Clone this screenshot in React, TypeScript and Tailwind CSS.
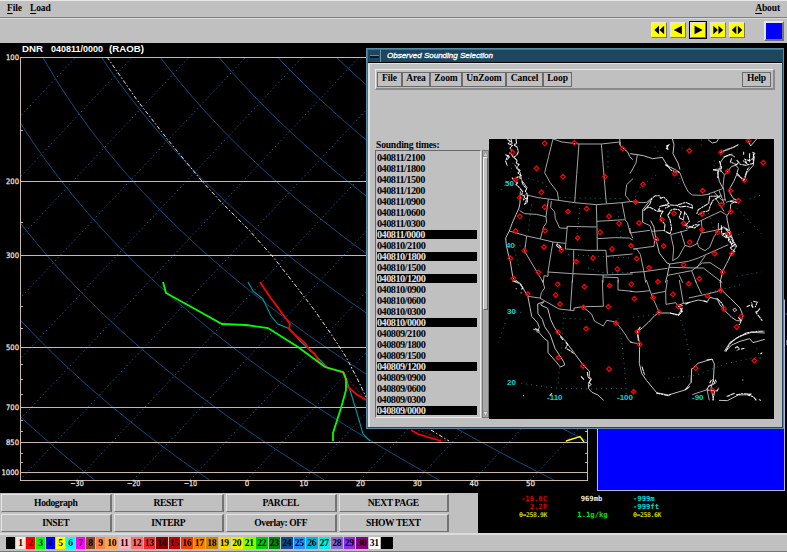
import React from "react";

const SERIF = "font-['Liberation_Serif','Times_New_Roman',serif] font-bold";
const RAISED =
  "border border-t-[#e6e6e6] border-l-[#e6e6e6] border-b-[#737373] border-r-[#737373]";

/* ---------- Skew-T geometry ---------- */
const yOf = (p: number) => 472 + 415 * Math.log10(p / 1000);
const xOf = (t: number, y: number) => 77 + (t + 30) * 5.67 + 0.936 * (480 - y);

const isotherms = Array.from({ length: 18 }, (_, i) => 20 + 56.7 * (i - 7));
const adiabats = Array.from({ length: 19 }, (_, i) => {
  const theta = 183.15 + 20 * i;
  const pts: string[] = [];
  for (let y = 57; y <= 480; y += 9) {
    const p = Math.pow(10, (y - 472) / 415);
    pts.push(`${xOf(theta * Math.pow(p, 0.286) - 273.15, y).toFixed(1)},${y}`);
  }
  return pts.join(" ");
});
const levels = [100, 200, 300, 500, 700, 850, 1000];
const minor = [150, 250, 400, 450, 550, 600, 650, 750, 800, 900, 950];
const temps = [-30, -20, -10, 0, 10, 20, 30, 40, 50];

function SkewT() {
  return (
    <svg width="787" height="450" viewBox="0 43 787 450" className="block">
      <rect x="0" y="43" width="787" height="450" fill="#000" />
      <defs>
        <clipPath id="plot">
          <rect x="20" y="57" width="568" height="423" />
        </clipPath>
      </defs>
      <g className="font-['Liberation_Sans',Arial,sans-serif] text-[9px] font-bold" fill="#fff">
        <text x="22" y="52" textLength="21" lengthAdjust="spacingAndGlyphs">DNR</text>
        <text x="51" y="52" textLength="52" lengthAdjust="spacingAndGlyphs">040811/0000</text>
        <text x="109" y="52" textLength="35" lengthAdjust="spacingAndGlyphs">(RAOB)</text>
      </g>
      <g clipPath="url(#plot)" fill="none">
        {isotherms.map((x) => (
          <line key={x} x1={x} y1="480" x2={x + 396} y2="57" stroke="#12568f" strokeWidth="1" strokeDasharray="1.5 2.5" />
        ))}
        {adiabats.map((pts) => (
          <polyline key={pts} points={pts} stroke="#0f4c84" strokeWidth="1" />
        ))}
      </g>
      <g stroke="#c9b8b0" strokeWidth="1" shapeRendering="crispEdges">
        {levels.map((p) => (
          <line key={p} x1="20" x2="588" y1={Math.floor(yOf(p)) + 0.5} y2={Math.floor(yOf(p)) + 0.5} />
        ))}
        <line x1="20" x2="588" y1="480.5" y2="480.5" />
        <line x1="20.5" x2="20.5" y1="57" y2="481" />
        <line x1="587.5" x2="587.5" y1="57" y2="481" />
        {minor.map((p) => (
          <path key={p} d={`M20 ${Math.floor(yOf(p))}.5h3M585 ${Math.floor(yOf(p))}.5h3`} />
        ))}
      </g>
      <g className="font-['DejaVu_Sans',sans-serif] text-[7.5px]" fill="#f3e6df" stroke="#f3e6df" strokeWidth="0.25">
        {levels.map((p) => (
          <text key={p} x={p === 1000 ? 1.5 : 6} y={yOf(p) + 2.5} textLength={p === 1000 ? 17.5 : 13} lengthAdjust="spacingAndGlyphs">{p}</text>
        ))}
        {temps.map((t) => (
          <text
            key={t}
            x={77 + (t + 30) * 5.67}
            y="486"
            textAnchor="middle"
            textLength={t < 0 ? 13.5 : t === 0 ? 4.5 : 9}
            lengthAdjust="spacingAndGlyphs"
          >
            {t < 0 ? `−${-t}` : t}
          </text>
        ))}
      </g>
      <g fill="none">
        <path d="M107 57L137 100L168 140L201 180L222 203L248 229L274 258L296 286L315 311L331 334L346 357L357 378L366 397M431 430L449 441" stroke="#e8e4e0" strokeWidth="1" strokeDasharray="4 2 1.5 2" />
        <path d="M248 282L253 291L263 299L271 316L278 324L290 329L300 341L313 353L328 368L344 373L350 390L359 420L363 434L370 441" stroke="#009c9c" strokeWidth="1.1" />
        <path d="M260 282L270 297L290 324L289 329L294 334L305 343L309 349L315 354L319 362L328 368L344 373L347 386L356 394L366 400M411 430L418 434L441 441" stroke="#f00" strokeWidth="1.8" />
        <path d="M345 375L354 386L366 400M418 430L447 441" stroke="#b00" strokeWidth="1" strokeDasharray="2 2" />
        <path d="M163 282L166 293L195 309L222 324L246 325L268 328L298 347L325 367L343 372L346 379L346 390L341 408L333 433L333 441" stroke="#0f0" strokeWidth="1.8" />
        <path d="M566 441L580 436.500L584 442" stroke="#ff0" strokeWidth="1.4" />
      </g>
      <rect x="597.5" y="300" width="187" height="190.500" fill="#00f" stroke="#b8b8d8" />
      <path d="M785.500 314h1.500M786.500 340v5" stroke="#777" />
    </svg>
  );
}

/* ---------- Station map: four quadrants, each in third-pixel units ---------- */
interface Quadrant {
  x: number;
  y: number;
  borders: string;
  coast: string;
  heavy: string;
  grid: string;
  stations: [number, number][];
}

const quadrants: Quadrant[] = [
  {
    x: 488,
    y: 138,
    borders:
      "M195 3L182 55L170 104L186 133L208 162L212 187M195 3L222 12L273 18L340 18L395 12M273 18L266 110L260 194M340 18L346 90L355 196M112 170L150 179L212 187L260 194L325 200L402 194L432 190M435 122L416 140L412 172L425 188M95 218L110 227L145 229L174 236L181 184M174 236L176 253L167 266L157 303M190 189L188 208L200 222L202 242L215 270L236 271L238 265L325 267M64 279L116 294L157 303L195 312L232 316M238 265L232 333M325 200L327 267L328 337M232 333L300 337L354 337L358 407M326 250L410 245L418 253L424 275L434 300M328 302L380 299L424 300L434 306M402 194L412 245M116 294L110 340L166 434M195 312L190 340L180 402L180 415L168 413L166 434M257 337L257 370L253 434M180 402L253 407L345 411L434 408M354 355L434 348M345 411L345 434M345 417L390 419L391 434",
    coast:
      "M97 160L96 195L93 210L84 230L72 257L64 279L53 300L55 322L60 345L66 365L70 390L75 420L86 434M395 3L397 24L405 30L419 42L425 55L434 65M80 80L97 105L100 125L118 150M397 12L394 20",
    heavy:
      "M58 4L67 10L61 17L73 22L66 30L72 40M69 3L72 16L64 20M84 3L86 17L77 20L88 28L91 42L86 52L76 58L70 48L64 44M52 50L60 53L56 60L53 70L58 84M60 51L64 57L57 65M78 58L88 68L84 76L93 79L86 90L96 97L90 105L99 113L87 118L100 121M72 119L80 130L90 134L84 139L94 149L104 161L101 170L110 174L107 185L118 179L112 195L109 200M101 130L106 141L116 152L112 160L119 170L118 193L110 198M205 322L216 332L222 334L215 323L208 318L205 322",
    grid:
      "M75 75L67 105M60 130L34 162M130 200L120 290M120 120L165 135L180 150M215 179L410 182M65 320L120 326M240 350L350 356L430 360M275 210L265 310M390 220L400 310M360 40L360 90M300 390L350 405L425 404M80 335L92 385",
    stations: [[170, 16], [259, 14], [404, 32], [74, 43], [145, 91], [225, 116], [351, 116], [83, 125], [160, 163], [95, 179], [170, 207], [95, 235], [240, 221], [296, 212], [363, 235], [393, 256], [83, 279], [171, 278], [336, 283], [269, 300], [168, 327], [220, 337], [109, 338], [372, 333], [429, 323], [315, 360], [67, 361], [265, 371], [388, 393], [151, 403], [76, 421]],
  },
  {
    x: 630,
    y: 138,
    borders:
      "M0 190L35 194L50 193L66 180M38 253L60 263L65 280L72 303L87 307M0 285L60 277M10 333L72 325L74 307M10 333L20 333L31 349L42 401L47 434M0 404L42 401L112 391M65 280L105 277M122 290L173 276M122 290L131 330L128 368M152 279L165 322M128 368L145 358L165 322L180 327L200 318L214 284M202 315L207 328L225 338L239 328L252 296L265 278M202 253L272 220L290 231M214 248L217 285M217 285L280 272M120 378L175 370L205 360L295 320M116 388L200 390L226 353M113 412L185 398L217 375M185 398L199 434M147 410L158 434M217 375L240 374L274 396L278 404M200 390L220 390L277 434M235 168L278 152L283 110M252 162L276 187L287 184M267 157L283 199M280 148L286 190M257 180L282 220M288 193L314 185M150 105L162 137L175 162L187 171L215 172L240 168M22 50L18 75L0 107",
    coast:
      "M0 47L22 50L40 53L68 62L97 58L112 83L140 97L150 105M127 3L132 20L129 47L144 75L150 95M283 110L270 95L272 72L282 58L300 49L315 57M285 110L305 85L318 82L325 91L320 110L311 131L300 150L299 164L310 181L321 187L302 199L301 220L290 234L292 248L299 280L311 310L320 325L303 348L295 367L290 376L278 400L270 434M66 180L38 215L38 253M62 248L72 267L77 301L88 345L111 375L119 378L112 412L106 434M320 110L343 126L350 105L370 82L373 55M0 270L0 285M272 42L295 35L325 20L312 28L290 34L271 44M234 5L247 15L260 12L265 3M355 8L362 24L380 3M262 100L268 130L278 150M282 266L265 276L265 255",
    heavy:
      "M108 25L116 21L109 32L116 34M112 22V35M105 80L116 87L110 80L123 96L137 102L148 102M41 218L59 199L66 181L76 173L88 173L92 181L101 177L109 185L117 196L105 201L90 205L86 216L98 220L82 220L60 208L48 210M91 205L115 201L118 205L105 211M100 218L92 231L91 246L105 258L103 278L120 288L125 272L120 245L113 232L124 216L133 213L146 215L154 222L147 239L160 245L164 222L173 235L178 250L165 263L177 265L194 270L207 260L193 260L184 268L168 271M120 201L140 202L167 193L187 202L187 210L168 205L151 207L139 202M205 230L220 222L236 218L242 200L249 187L270 174L239 175L236 196L205 215L200 228M268 69L276 92L249 95L275 100M265 98L263 121M281 57L307 48M305 61L301 72L320 80L326 73L320 66L331 79L347 82L370 76L370 54L374 46L369 44L372 60L358 68L345 64L350 76L339 68M341 41V50M359 46L358 73M320 105L341 128L348 106L353 94L358 86M300 190L325 195M274 262L275 288L285 286L278 292L289 299L294 282L283 268L300 280L295 310L315 320L300 330L314 340L302 350M295 280L311 316M286 290L301 308L305 322L320 325",
    grid:
      "M155 30L180 40M215 5L212 35M320 210L395 288M390 172L355 184M325 290L345 282M320 415L395 402M150 120L145 145M40 140L80 110M250 100L255 60M235 225L250 270M10 190L32 145M75 25L92 55",
    stations: [[355, 8], [178, 38], [273, 43], [400, 74], [293, 100], [134, 107], [343, 126], [39, 139], [218, 158], [301, 158], [17, 192], [325, 188], [274, 200], [132, 226], [216, 228], [302, 221], [96, 245], [27, 255], [161, 256], [216, 275], [263, 283], [297, 286], [79, 304], [179, 313], [101, 324], [20, 362], [254, 347], [306, 347], [161, 380], [57, 389], [278, 402], [208, 422]],
  },
  {
    x: 488,
    y: 280,
    borders:
      "M119 49L155 54L213 87L258 92L258 84L286 80L346 79L343 0M253 0L247 91M163 0L170 24L160 38L157 54M286 82L311 102L319 123L346 138L356 121L383 126L399 145L413 165L423 182L434 188M390 0L390 30L434 34",
    coast:
      "M83 0L98 12L108 30L119 47L126 82L131 109L149 129L154 142L150 151L136 148M149 72L168 65M149 72L150 101L163 118L170 140L187 165L201 205L227 245L230 255L217 261L204 245L180 218L180 184L168 175L153 157L145 155M168 65L158 75L179 85L188 119L198 140L211 160L233 184L258 218L286 256L304 273L304 290L310 297L301 310L302 326L312 337L330 345L347 361",
    heavy:
      "M73 2L95 10L105 24L99 29M83 26H86M98 38L101 39M142 145L156 155M217 169L225 180M233 187L239 193L233 204L249 214L258 221M279 289L288 299M298 276L300 291L309 298L303 308L309 313L304 319M185 347L192 340M105 347H108",
    grid:
      "M100 98L68 94M57 115L31 187M227 98L223 180L212 290L210 320M230 115L300 118M390 115L403 200L413 300L415 345M100 310L205 325L320 327L415 325",
    stations: [[209, 13], [289, 20], [365, 17], [119, 42], [203, 45], [216, 72], [286, 82], [361, 80], [384, 129], [294, 146], [210, 156], [211, 233], [285, 258], [363, 267]],
  },
  {
    x: 630,
    y: 280,
    borders:
      "M0 34L20 36L60 32L49 0M60 32L68 53L78 75L88 99M66 42L107 34L112 0M107 34L108 73L137 68L143 77M148 0L160 70M176 54L232 42L260 35L272 30M195 0L215 43M0 187L28 191M185 265L184 308M187 344L231 329L238 361",
    coast:
      "M88 97L75 106L55 127L38 143L22 155L29 192L28 250L35 280L50 302L80 338L115 345L165 330L183 307L185 268L204 250L246 237L253 252L250 300L243 324L251 361M88 99L118 99L145 104L155 88L143 77L160 70L175 68L205 60L232 65L240 52L262 58L270 75L282 89L305 112L320 122L334 123L339 107L330 84L301 55L272 28L272 0M309 88L316 85L320 91L313 95L309 88M283 214L300 187L330 169L364 157L404 159M288 213L305 195L330 184L359 176L369 188L404 178M267 361L292 362L325 345L360 344",
    heavy:
      "M31 140L22 155L25 182M36 260L44 285M78 339L115 347L125 342M165 330L180 319M120 99L145 106L157 94L147 80L158 76M153 96L157 83M166 73L180 66M221 62L232 67M260 54L276 70L282 84M325 112L334 123L327 135M287 215L300 191L318 175L351 158L386 154L403 154M315 204L322 200L328 207L320 212M333 208L343 205M391 222L397 218M230 240L248 238M248 298L255 310L237 318L230 330L261 333L267 323M239 310L244 300M256 299L259 307M254 333L248 361M318 345L335 341L365 342L356 346L370 350L379 361M388 358L392 362M350 80L360 76M370 64L382 67L375 82M364 75L369 83L364 67M390 85L379 99L390 113L397 122M383 94L376 97M314 340L290 349L299 347M337 300H340",
    grid:
      "M10 112L75 103L85 97M152 120L163 150L183 250M115 295L200 285L285 252L375 232L405 235M240 37L330 15M380 205L390 235",
    stations: [[4, 13], [84, 5], [176, 11], [129, 43], [13, 56], [69, 53], [232, 47], [272, 31], [145, 80], [282, 87], [87, 97], [334, 109], [320, 141], [22, 155], [29, 193], [197, 265], [373, 242], [11, 335], [247, 331]],
  },
];

const mapLabels: [string, number, number][] = [
  ["50", 505, 186],
  ["40", 506, 248],
  ["30", 507, 314],
  ["20", 507, 385],
  ["-110", 547, 400],
  ["-100", 617, 400],
  ["-90", 692, 400],
];

function StationMap() {
  return (
    <svg width="285" height="280" viewBox="489 139 285 280" className="block bg-black">
      {quadrants.map((q) => (
        <g key={`${q.x}-${q.y}`} transform={`translate(${q.x} ${q.y}) scale(0.33333)`} fill="none">
          <path d={q.grid} stroke="#008080" strokeWidth="3" strokeDasharray="3 12" />
          <path d={q.borders} stroke="#b0b0b0" strokeWidth="2.8" />
          <path d={q.coast} stroke="#c8c8c8" strokeWidth="2.9" />
          <path d={q.heavy} stroke="#f4f4f4" strokeWidth="3.1" strokeDasharray="14 1.5 7 2" />
        </g>
      ))}
      {quadrants.map((q) => (
        <g key={`s${q.x}-${q.y}`} transform={`translate(${q.x} ${q.y}) scale(0.33333)`} fill="none">
          {q.stations.map(([x, y]) => (
            <path key={`${x}-${y}`} d={`M${x} ${y - 7}l7 7l-7 7l-7 -7z`} stroke="#f00" strokeWidth="3.6" />
          ))}
        </g>
      ))}
      <g className="font-['Liberation_Sans',Arial,sans-serif] text-[8px] font-bold" fill="#00d8d8">
        {mapLabels.map(([t, x, y]) => (
          <text key={t} x={x} y={y}>{t}</text>
        ))}
      </g>
    </svg>
  );
}

/* ---------- Dialog ---------- */
const selected = new Set(["040811/0000", "040810/1800", "040810/1200", "040810/0000", "040809/1200", "040809/0000"]);
const times = ["040811", "040810", "040809"].flatMap((d) =>
  ["2100", "1800", "1500", "1200", "0900", "0600", "0300", "0000"].map((h) => `${d}/${h}`)
);
const dialogMenu: [string, string][] = [
  ["File", "w-[25px]"],
  ["Area", "w-[28px]"],
  ["Zoom", "w-[32px]"],
  ["UnZoom", "w-[44px]"],
  ["Cancel", "w-[37px]"],
  ["Loop", "w-[29px]"],
];

function Dialog() {
  return (
    <div className="absolute top-[48px] left-[366px] flex h-[381px] w-[418px] flex-col border-2 border-[#1d465f] border-t-[#3c7591] border-l-[#3c7591] bg-[#c0c0c0] outline outline-1 -outline-offset-1 outline-[#5a8ca6]">
      <div className="flex h-[13px] shrink-0 items-center border-b border-black bg-[#1d465f]">
        <div className="flex h-full w-[13px] items-center justify-center border-r border-[#6f97ab]">
          <div className="h-[3px] w-[9px] border-t border-[#5c8ba3] bg-[#061a28]" />
        </div>
        <span className="pl-[6px] font-['Liberation_Sans',Arial,sans-serif] text-[8px] leading-none text-white italic [-webkit-text-stroke:0.3px_white]">
          Observed Sounding Selection
        </span>
      </div>
      <div className="flex grow flex-col border-t border-l-2 border-[#e2e2e2] px-[5px] pt-[5px]">
        <div className="flex h-[21px] w-[400px] shrink-0 items-center justify-between border-t border-r-2 border-b-2 border-l border-t-[#ececec] border-r-[#8a8a8a] border-b-[#8a8a8a] border-l-[#ececec] pr-[2px] pl-[1px]">
          <div className="flex">
            {dialogMenu.map(([t, w]) => (
              <div key={t} className={`flex h-[15px] items-center justify-center border border-[#6b6b6b] text-[9.5px] leading-none tracking-[-0.1px] ${SERIF} ${w}`}>
                {t}
              </div>
            ))}
          </div>
          <div className={`flex h-[15px] w-[29px] items-center justify-center border border-[#6b6b6b] text-[9.5px] leading-none tracking-[-0.1px] ${SERIF}`}>
            Help
          </div>
        </div>
        <div className="mt-[48px] flex">
          <div className="flex w-[114px] shrink-0 flex-col">
            <div className={`h-[12px] pl-[1px] text-[9.6px] leading-[13px] tracking-[-0.2px] ${SERIF}`}>Sounding times:</div>
            <div className="flex">
              <div className="h-[268px] w-[106px] border border-t-[#686868] border-r-[#ececec] border-b-[#ececec] border-l-[#686868] pt-px pl-px">
                {times.map((t) => (
                  <div key={t} className={`h-[11px] w-[100px] text-[10.3px] leading-[11px] tracking-[-0.55px] ${SERIF} ${selected.has(t) ? "border-y border-[#c0c0c0] bg-black leading-[9px]! text-[#e0e0e0]" : ""}`}>
                    {t}
                  </div>
                ))}
              </div>
              <div className="ml-[1px] flex h-[268px] w-[7px] flex-col items-center border border-[#777] bg-[#a8a8a8]">
                <svg width="5" height="6" viewBox="0 0 5 6" className="shrink-0"><path d="M0 5.500L2.500 0.500L5 5.500z" fill="#ccc" stroke="#777" strokeWidth=".6" /></svg>
                <div className="h-[153px] w-[5px] shrink-0 border border-t-[#eee] border-r-[#666] border-b-[#666] border-l-[#eee] bg-[#c0c0c0]" />
                <div className="grow" />
                <svg width="5" height="6" viewBox="0 0 5 6" className="shrink-0"><path d="M0 0.500L2.500 5.500L5 0.500z" fill="#ddd" stroke="#777" strokeWidth=".6" /></svg>
              </div>
            </div>
          </div>
          <div className="mt-[1px] h-[280px] w-[285px] shrink-0">
            <StationMap />
          </div>
        </div>
      </div>
    </div>
  );
}

/* ---------- Main window ---------- */
const players = [
  "M7 2V12L1.500 7zM13 2V12L7.500 7z",
  "M11.500 2V12L2 7z",
  "M3 2V12L12.500 7z",
  "M1.500 2V12L7 7zM7.500 2V12L13 7z",
  "M6.200 2V12L1 7zM8 2V12L13.200 7z",
];

const buttons = ["Hodograph", "RESET", "PARCEL", "NEXT PAGE", "INSET", "INTERP", "Overlay: OFF", "SHOW TEXT"];

const colors = [
  "#000000", "#ffe4dc", "#ff0000", "#00ff00", "#0000ff", "#ffff00", "#00ffff", "#ff00ff",
  "#8b4726", "#ff8247", "#ffa54f", "#ffaeb9", "#ff6a6a", "#ee2c2c", "#8b0000", "#cd0000",
  "#ee4000", "#ff7f00", "#cd8500", "#ffd700", "#eeee00", "#7fff00", "#00cd00", "#008b00",
  "#104e8b", "#1e90ff", "#00b2ee", "#00eeee", "#8968cd", "#912cee", "#8b008b", "#ffffff", "#000000",
];

export default function App() {
  return (
    <div className="relative flex h-[552px] w-[787px] flex-col overflow-hidden bg-[#c0c0c0] text-black">
      <div className={`flex h-[18px] shrink-0 items-center border-t border-b border-t-[#e8e8e8] border-b-[#808080] pr-[7px] pl-[7px] text-[9.5px] leading-none tracking-[-0.1px] ${SERIF}`}>
        <span><span className="underline underline-offset-2">F</span>ile</span>
        <span className="ml-[8px]"><span className="underline underline-offset-2">L</span>oad</span>
        <span className="ml-auto"><span className="underline underline-offset-2">A</span>bout</span>
      </div>
      <div className="flex h-[25px] shrink-0 items-center justify-end border-t border-[#d8d8d8] pr-[3px]">
        <div className="flex items-center gap-[3px] pb-[3px]">
          {players.map((d, i) => (
            <div key={d} className={i === 2 ? "border border-black" : ""}>
              <div className={`h-[16px] w-[16px] bg-[#ff0] p-px ${RAISED}`}>
                <svg width="12" height="12" viewBox="0 0 14 14" className="block"><path d={d} fill="#000" /></svg>
              </div>
            </div>
          ))}
        </div>
        <div className={`ml-[19px] h-[20px] w-[20px] border-2 bg-[#00f] ${RAISED}`} />
      </div>
      <SkewT />
      <div className="flex h-[40px] shrink-0">
        <div className="grid w-[450px] shrink-0 grid-cols-4 grid-rows-2 gap-x-[2px] gap-y-[2px] py-[1px] pr-px pl-[1px]">
          {buttons.map((b) => (
            <div key={b} className={`flex items-center justify-center border-r-2 text-[9.6px] leading-none tracking-[-0.4px] ${SERIF} ${RAISED}`}>
              {b}
            </div>
          ))}
        </div>
        <div className="w-[28px] shrink-0" />
        <div className="grid grow grid-cols-[49px_86px_1fr] content-start bg-black pt-[2px] pl-[20px] font-['DejaVu_Sans_Mono',monospace] text-[7.2px] leading-[8px] font-bold whitespace-nowrap">
          <div className="text-right text-[#d60000]">-16.6C<br />2.2F</div>
          <div className="pl-[3px] text-center text-[#eee]">969mb</div>
          <div className="text-[#00dede]">-999m<br />-999ft</div>
          <div className="text-right text-[6.5px] tracking-[-0.4px] text-[#d0d000]">θ=258.9K</div>
          <div className="pl-[5px] text-center text-[#00e800]">1.1g/kg</div>
          <div className="text-[6.5px] tracking-[-0.4px] text-[#d0d000]">θ=258.6K</div>
        </div>
      </div>
      <div className="flex grow items-center gap-[1px] border-t-2 border-b border-[#dcdcdc] border-b-[#777] pb-px pl-[6px]">
        {colors.map((c, i) => (
          <div
            key={i}
            className={`flex h-[12px] shrink-0 items-center justify-center text-[9.6px] leading-none tracking-[-0.2px] ${SERIF} ${i < 10 ? "w-[9px]" : "w-[11.5px]"}`}
            style={{ backgroundColor: c }}
          >
            {i > 0 && i < 32 ? i : ""}
          </div>
        ))}
      </div>
      <Dialog />
    </div>
  );
}
